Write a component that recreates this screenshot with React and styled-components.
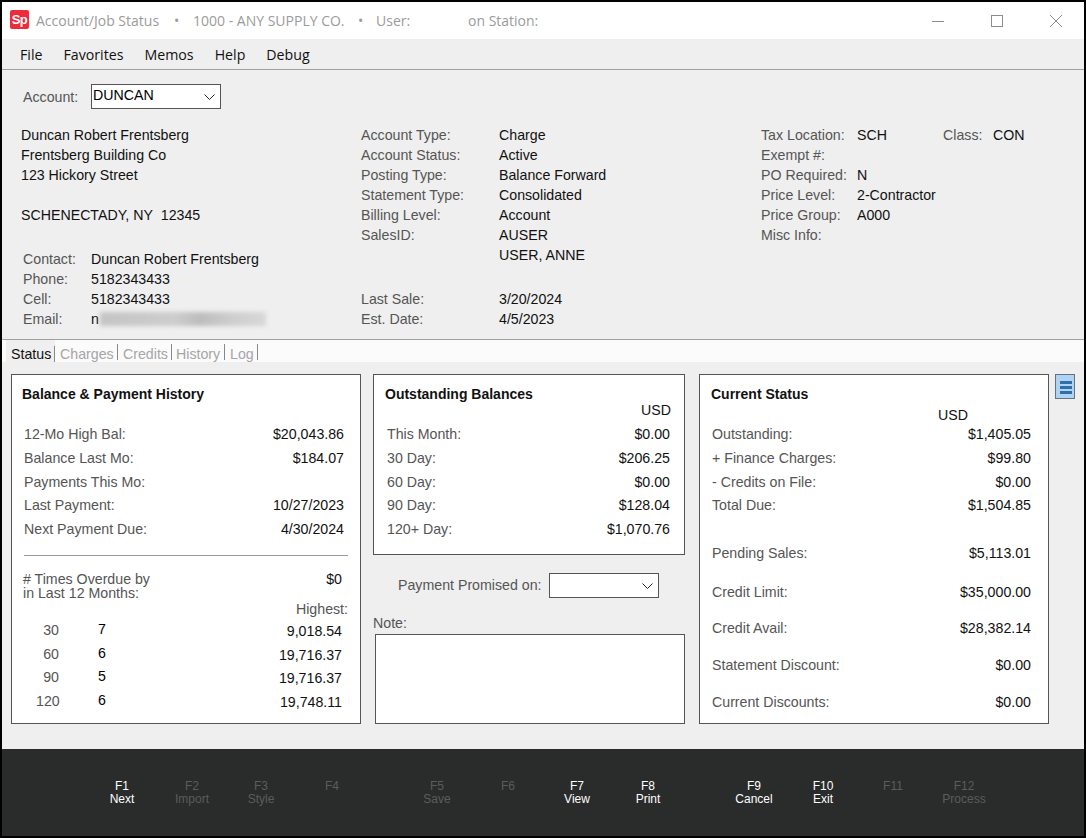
import React from 'react';
import styled, {createGlobalStyle} from 'styled-components';

const GlobalStyle = createGlobalStyle`
  html, body {
    margin: 0;
    padding: 0;
    background: #000;
  }
  body {
    font-family: "Liberation Sans", Arial, sans-serif;
  }
`;

const Win = styled.div`
  position: relative;
  width: 1086px;
  height: 838px;
  box-sizing: border-box;
  border: 2px solid #000;
  background: #efefef;
  overflow: hidden;
  color: #111;
  font-size: 14.2px;
`;

// everything inside is placed from the window's outer corner, so subtract the 2px frame
const Placed = styled.div`
  position: absolute;
  left: ${p => p.$x - 2}px;
  top: ${p => p.$y - 2}px;
`;

const TitleBar = styled.div`
  position: absolute;
  left: 0;
  right: 0;
  top: 0;
  height: 37px;
  background: #fff;
  color: #9b9b9b;
  font-family: "Open Sans", sans-serif;
  font-size: 14px;
  line-height: 37px;
`;

const Logo = styled.div`
  position: absolute;
  left: 8px;
  top: 8px;
  width: 19px;
  height: 19px;
  background: #ee2b3b;
  border-radius: 2px;
  color: #fff;
  font: bold 13px/19px "Liberation Sans", sans-serif;
  letter-spacing: -0.5px;
  text-align: center;
`;

const TitleText = styled.span`
  position: absolute;
  left: ${p => p.$x - 2}px;
  top: 0;
  white-space: nowrap;
`;

const WinControl = styled.svg`
  position: absolute;
  left: ${p => p.$x - 2}px;
  top: 12px;
  width: 14px;
  height: 14px;
  fill: none;
  stroke: #8c8c8c;
  stroke-width: 1;
`;

const MenuBar = styled.div`
  position: absolute;
  left: 0;
  right: 0;
  top: 37px;
  height: 30px;
  border-bottom: 1px solid #a0a0a0;
  display: flex;
  padding-left: 18px;
  gap: 21px;
  font-family: "Open Sans", sans-serif;
  font-size: 14.2px;
  line-height: 31px;
  color: #111;
`;

const Label = styled.span`
  color: #555;
  white-space: nowrap;
`;

const Select = styled.div`
  position: absolute;
  left: ${p => p.$x - 2}px;
  top: ${p => p.$y - 2}px;
  width: ${p => p.$w}px;
  height: 25px;
  box-sizing: border-box;
  border: 1px solid #555;
  background: #fff;
  padding-left: 1px;
  line-height: 20px;
  color: #000;
  svg {
    position: absolute;
    right: 5px;
    top: 9px;
    width: 11px;
    height: 6px;
    fill: none;
    stroke: #222;
    stroke-width: 1;
  }
`;

const Lines = styled.div`
  line-height: 20px;
  white-space: nowrap;
`;

const Line = styled.div`
  display: flex;
  height: 20px;
`;

const Key = styled(Label)`
  width: ${p => p.$w}px;
  flex: none;
`;

const Rule = styled.div`
  position: absolute;
  left: 0;
  right: 0;
  top: 337px;
  height: 1px;
  background: #a0a0a0;
`;

const TabStrip = styled.div`
  position: absolute;
  left: 0;
  right: 0;
  top: 338px;
  height: 22px;
  background: #fbfbfb;
`;

const Tab = styled.div`
  position: absolute;
  left: ${p => p.$x - 2}px;
  top: 0;
  width: ${p => p.$w}px;
  height: 22px;
  box-sizing: border-box;
  padding-left: ${p => p.$pad}px;
  background: ${p => (p.$active ? '#efefef' : 'transparent')};
  color: ${p => (p.$active ? '#111' : '#a6a6a6')};
  line-height: 28px;
  overflow: hidden;
  white-space: nowrap;
  &::after {
    content: '';
    position: absolute;
    right: 0;
    top: ${p => (p.$active ? 6 : 4)}px;
    bottom: ${p => (p.$active ? 0 : 2)}px;
    width: 1px;
    background: #888;
  }
`;

const Panel = styled.div`
  position: absolute;
  left: ${p => p.$x - 2}px;
  top: 372px;
  width: ${p => p.$w}px;
  height: ${p => p.$h}px;
  box-sizing: border-box;
  border: 1px solid #555;
  background: #fff;
`;

const PanelTitle = styled.div`
  position: absolute;
  left: ${p => p.$left}px;
  top: 9px;
  font-size: 14px;
  font-weight: 700;
  line-height: 20px;
  color: #111;
  white-space: nowrap;
`;

const Rows = styled.div`
  position: absolute;
  left: ${p => p.$left}px;
  right: ${p => p.$right}px;
  top: 47px;
`;

const Row = styled.div`
  display: flex;
  justify-content: space-between;
  height: 23.75px;
  line-height: 24px;
  margin-top: ${p => p.$mt || 0}px;
`;

const Value = styled.span`
  color: #111;
`;

const Usd = styled.div`
  position: absolute;
  left: ${p => p.$left}px;
  top: ${p => p.$top}px;
  line-height: 20px;
`;

const Divider = styled.div`
  position: absolute;
  left: 12px;
  right: 12px;
  top: 180px;
  height: 1px;
  background: #9a9a9a;
`;

const Overdue = styled.div`
  position: absolute;
  left: 11px;
  right: 18px;
  top: 197px;
  display: flex;
  justify-content: space-between;
  line-height: 14px;
`;

const Highest = styled(Label)`
  position: absolute;
  right: 12px;
  top: 224px;
  line-height: 20px;
`;

const AgingRows = styled.div`
  position: absolute;
  left: 24px;
  right: 18px;
  top: 244px;
`;

const AgingRow = styled.div`
  display: flex;
  height: 23.7px;
  line-height: 23.7px;
`;

const AgingDays = styled(Label)`
  width: 23px;
  text-align: right;
`;

const AgingCount = styled.span`
  flex: 1;
  margin-left: 39px;
  position: relative;
  top: -1px;
  color: #000;
`;

const AgingHigh = styled(Value)`
  position: relative;
  top: 1px;
`;

const NoteBox = styled.div`
  position: absolute;
  left: 373px;
  top: 632px;
  width: 310px;
  height: 90px;
  box-sizing: border-box;
  border: 1px solid #555;
  background: #fff;
`;

const SideMenu = styled.div`
  position: absolute;
  left: 1053px;
  top: 372px;
  width: 20px;
  height: 25px;
  box-sizing: border-box;
  border: 1px solid #66727e;
  background: #aed3f3;
  padding: 6px 2px 0 4px;
  display: flex;
  flex-direction: column;
  gap: 2px;
  span {
    display: block;
    height: 3px;
    background: #2f6ea8;
  }
`;

const Footer = styled.div`
  position: absolute;
  left: 0;
  right: 0;
  top: 747px;
  bottom: 0;
  background: #2a2b2b;
  font-size: 12px;
`;

const FKey = styled.div`
  position: absolute;
  left: ${p => p.$c - 2}px;
  top: 31px;
  transform: translateX(-50%);
  text-align: center;
  line-height: 13px;
  white-space: nowrap;
  color: ${p => (p.$on ? '#fff' : '#5c5c5c')};
`;

const Email = styled.span`
  position: relative;
  display: inline-block;
  &::after {
    content: '';
    position: absolute;
    left: 9px;
    top: 3px;
    width: 166px;
    height: 14px;
    background: linear-gradient(90deg, #c4c4c4, #cdcdcd 45%, #bdbdbd 60%, #cecece 80%, #d8d8d8);
    filter: blur(2px);
  }
`;

const Chevron = () => (
    <svg viewBox="0 0 11 6"><path d="M0.5 0.5 L5.5 5.5 L10.5 0.5"/></svg>
);

const fkeys = [
    [122, 'F1', 'Next', true], [192, 'F2', 'Import'], [261, 'F3', 'Style'], [332, 'F4', ''],
    [437, 'F5', 'Save'], [508, 'F6', ''], [577, 'F7', 'View', true], [648, 'F8', 'Print', true],
    [754, 'F9', 'Cancel', true], [823, 'F10', 'Exit', true], [893, 'F11', ''], [964, 'F12', 'Process'],
];

const tabs = [
    ['Status', 6, 49, 5, true], ['Charges', 55, 63, 5], ['Credits', 118, 54, 5],
    ['History', 172, 53, 4], ['Log', 225, 33, 5],
];

const history = [
    ['12-Mo High Bal:', '$20,043.86'], ['Balance Last Mo:', '$184.07'], ['Payments This Mo:', ''],
    ['Last Payment:', '10/27/2023'], ['Next Payment Due:', '4/30/2024'],
];

const aging = [
    ['30', '7', '9,018.54'], ['60', '6', '19,716.37'], ['90', '5', '19,716.37'], ['120', '6', '19,748.11'],
];

const outstanding = [
    ['This Month:', '$0.00'], ['30 Day:', '$206.25'], ['60 Day:', '$0.00'], ['90 Day:', '$128.04'], ['120+ Day:', '$1,070.76'],
];

const current = [
    ['Outstanding:', '$1,405.05'], ['+ Finance Charges:', '$99.80'], ['- Credits on File:', '$0.00'], ['Total Due:', '$1,504.85'],
    ['Pending Sales:', '$5,113.01', 24], ['Credit Limit:', '$35,000.00', 15], ['Credit Avail:', '$28,382.14', 12.5],
    ['Statement Discount:', '$0.00', 13], ['Current Discounts:', '$0.00', 13],
];

const KeyLines = ({w, rows}) => (
    <Lines>
        {rows.map(([k, v]) => (
            <Line key={k}><Key $w={w}>{k}</Key><Value>{v}</Value></Line>
        ))}
    </Lines>
);

const Amounts = ({rows, left, right}) => (
    <Rows $left={left} $right={right}>
        {rows.map(([k, v, mt]) => (
            <Row key={k} $mt={mt}><Label>{k}</Label><Value>{v}</Value></Row>
        ))}
    </Rows>
);

const App = () => (
    <Win>
        <GlobalStyle/>
        <TitleBar>
            <Logo>Sp</Logo>
            <TitleText $x={36}>Account/Job Status</TitleText>
            <TitleText $x={174}>•</TitleText>
            <TitleText $x={193}>1000 - ANY SUPPLY CO.</TitleText>
            <TitleText $x={358}>•</TitleText>
            <TitleText $x={376}>User:</TitleText>
            <TitleText $x={468}>on Station:</TitleText>
            <WinControl $x={931} viewBox="0 0 14 14"><path d="M1 7.5 H13"/></WinControl>
            <WinControl $x={990} viewBox="0 0 14 14"><rect x="1.5" y="1.5" width="11" height="11"/></WinControl>
            <WinControl $x={1049} viewBox="0 0 14 14"><path d="M1 1 L13 13 M13 1 L1 13"/></WinControl>
        </TitleBar>
        <MenuBar>
            <span>File</span><span>Favorites</span><span>Memos</span><span>Help</span><span>Debug</span>
        </MenuBar>

        <Placed $x={23} $y={87}><Lines><Label>Account:</Label></Lines></Placed>
        <Select $x={91} $y={84} $w={130}>DUNCAN<Chevron/></Select>

        <Placed $x={21} $y={125}>
            <Lines>
                <Line>Duncan Robert Frentsberg</Line>
                <Line>Frentsberg Building Co</Line>
                <Line>123 Hickory Street</Line>
                <Line/>
                <Line>SCHENECTADY, NY&nbsp; 12345</Line>
            </Lines>
        </Placed>
        <Placed $x={23} $y={249}>
            <Lines>
                <Line><Key $w={68}>Contact:</Key><Value>Duncan Robert Frentsberg</Value></Line>
                <Line><Key $w={68}>Phone:</Key><Value>5182343433</Value></Line>
                <Line><Key $w={68}>Cell:</Key><Value>5182343433</Value></Line>
                <Line><Key $w={68}>Email:</Key><Email>n</Email></Line>
            </Lines>
        </Placed>

        <Placed $x={361} $y={125}>
            <KeyLines w={138} rows={[
                ['Account Type:', 'Charge'], ['Account Status:', 'Active'], ['Posting Type:', 'Balance Forward'],
                ['Statement Type:', 'Consolidated'], ['Billing Level:', 'Account'], ['SalesID:', 'AUSER'], ['', 'USER, ANNE'],
            ]}/>
        </Placed>
        <Placed $x={361} $y={289}>
            <KeyLines w={138} rows={[['Last Sale:', '3/20/2024'], ['Est. Date:', '4/5/2023']]}/>
        </Placed>

        <Placed $x={761} $y={125}>
            <KeyLines w={96} rows={[
                ['Tax Location:', 'SCH'], ['Exempt #:', ''], ['PO Required:', 'N'], ['Price Level:', '2-Contractor'],
                ['Price Group:', 'A000'], ['Misc Info:', ''],
            ]}/>
        </Placed>
        <Placed $x={943} $y={125}>
            <KeyLines w={50} rows={[['Class:', 'CON']]}/>
        </Placed>

        <Rule/>
        <TabStrip>
            {tabs.map(([name, x, w, pad, active]) => (
                <Tab key={name} $x={x} $w={w} $pad={pad} $active={active}>{name}</Tab>
            ))}
        </TabStrip>

        <Panel $x={11} $w={350} $h={350}>
            <PanelTitle $left={10}>Balance &amp; Payment History</PanelTitle>
            <Amounts rows={history} left={12} right={16}/>
            <Divider/>
            <Overdue>
                <Label>
                    # Times Overdue by<br/>in Last 12 Months:
                </Label>
                <Value>$0</Value>
            </Overdue>
            <Highest>Highest:</Highest>
            <AgingRows>
                {aging.map(([d, n, v]) => (
                    <AgingRow key={d}>
                        <AgingDays>{d}</AgingDays>
                        <AgingCount>{n}</AgingCount>
                        <AgingHigh>{v}</AgingHigh>
                    </AgingRow>
                ))}
            </AgingRows>
        </Panel>

        <Panel $x={373} $w={312} $h={181}>
            <PanelTitle $left={11}>Outstanding Balances</PanelTitle>
            <Usd $left={267} $top={25}>USD</Usd>
            <Amounts rows={outstanding} left={13} right={14}/>
        </Panel>

        <Placed $x={398} $y={575}><Lines><Label>Payment Promised on:</Label></Lines></Placed>
        <Select $x={549} $y={573} $w={110}><Chevron/></Select>
        <Placed $x={373} $y={613}><Lines><Label>Note:</Label></Lines></Placed>
        <NoteBox/>

        <Panel $x={699} $w={350} $h={350}>
            <PanelTitle $left={11}>Current Status</PanelTitle>
            <Usd $left={238} $top={30}>USD</Usd>
            <Amounts rows={current} left={12} right={17}/>
        </Panel>

        <SideMenu><span/><span/><span/></SideMenu>

        <Footer>
            {fkeys.map(([c, f, name, on]) => (
                <FKey key={f} $c={c} $on={on}>{f}<br/>{name}</FKey>
            ))}
        </Footer>
    </Win>
);

export default App;
